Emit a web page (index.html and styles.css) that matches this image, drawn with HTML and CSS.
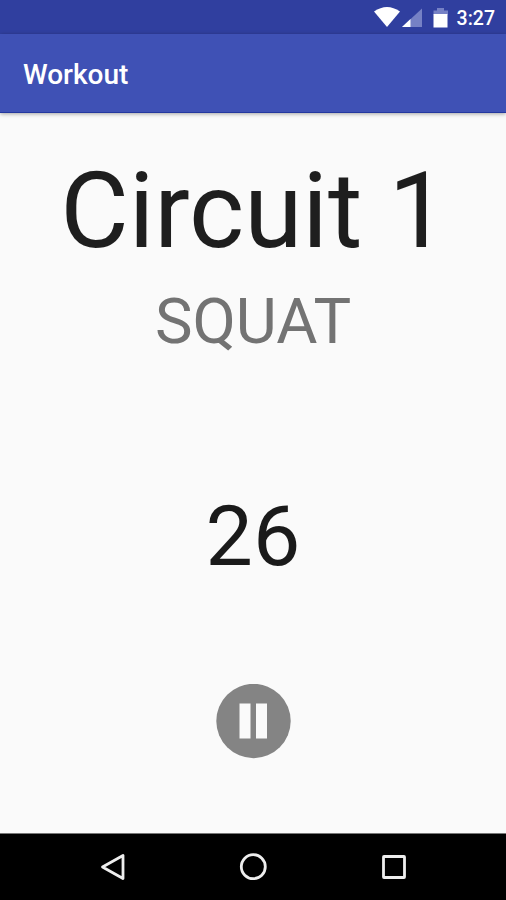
FILE: index.html
```html
<!DOCTYPE html>
<html lang="en">
<head>
    <meta charset="UTF-8">
    <meta name="viewport" content="width=device-width, initial-scale=1.0">
    <title>Workout</title>
    <link rel="stylesheet" href="styles.css">
</head>
<body>
    <div class="status-bar">
        <svg class="status-icons" width="76" height="34" viewBox="0 0 76 34">
            <path d="M0 11.5 Q13 2.5 26 11.5 L13 27 Z" fill="#fff"/>
            <path d="M48 8.5 V27 H28 Z" fill="#7681c5"/>
            <path d="M36.5 19 V27 H28 Z" fill="#fff"/>
            <path d="M63 8 h7 v2.500 h4 v4 H59.500 v-4 H63 Z" fill="#7681c5"/>
            <rect x="59.5" y="14" width="14" height="13.5" fill="#fff"/>
        </svg>
        <span class="clock">3:27</span>
    </div>

    <header class="app-bar">
        <h1>Workout</h1>
    </header>

    <main class="workout">
        <div class="circuit">Circuit 1</div>
        <div class="exercise">SQUAT</div>
        <div class="timer">26</div>
        <button class="pause" aria-label="Pause">
            <svg width="75" height="75" viewBox="0 0 75 75">
                <circle cx="37.5" cy="37" r="37.2" fill="#848484"/>
                <rect x="23.5" y="19.5" width="11" height="35" fill="#fafafa"/>
                <rect x="40" y="19.5" width="11" height="35" fill="#fafafa"/>
            </svg>
        </button>
    </main>

    <nav class="nav-bar">
        <svg width="28" height="28" viewBox="0 0 28 28">
            <path d="M24 2.5 V25.5 L3.5 14 Z"/>
        </svg>
        <svg width="28" height="28" viewBox="0 0 28 28">
            <circle cx="14.3" cy="13.7" r="12"/>
        </svg>
        <svg width="28" height="28" viewBox="0 0 28 28">
            <rect x="3.5" y="3.5" width="21" height="21" rx="0.5"/>
        </svg>
    </nav>
</body>
</html>
```
FILE: styles.css
```css
body {
    margin: 0;
    height: 900px;
    display: flex;
    flex-direction: column;
    overflow: hidden;
    background-color: #fafafa;
    font-family: Roboto, "Liberation Sans", sans-serif;
}

.status-bar {
    height: 34px;
    flex: none;
    display: flex;
    justify-content: flex-end;
    gap: 7px;
    padding-right: 11px;
    background-color: #303f9f;
}

.clock {
    color: #fff;
    font-size: 19.5px;
    font-weight: 500;
    line-height: 38px;
}

.app-bar {
    height: 78px;
    flex: none;
    display: flex;
    align-items: center;
    padding-left: 23px;
    background-color: #3f51b5;
    border-bottom: 1px solid #24389f;
    box-shadow: 0 1px 4px rgba(0, 0, 0, 0.35);
}

h1 {
    margin: 3px 0 0;
    color: #fff;
    font-size: 28px;
    font-weight: 500;
}

.workout {
    flex: 1;
    display: flex;
    flex-direction: column;
    align-items: center;
    padding-top: 38px;
}

.circuit {
    padding-left: 2px;
    color: #1e1e1e;
    font-size: 105.4px;
    line-height: 120px;
}

.exercise {
    margin-top: 13px;
    color: #737373;
    font-size: 63.2px;
    line-height: 74px;
}

.timer {
    margin-top: 129px;
    color: #1a1a1a;
    font-size: 84.3px;
    line-height: 100px;
}

.pause {
    margin-top: 97px;
    padding: 0;
    border: none;
    background: none;
    line-height: 0;
}

.nav-bar {
    height: 66px;
    flex: none;
    display: flex;
    justify-content: center;
    align-items: center;
    gap: 112.5px;
    border-top: 1px solid #777;
    background-color: #000;
}

.nav-bar svg {
    fill: none;
    stroke: #eee;
    stroke-width: 2.8;
    stroke-linejoin: round;
}
```
